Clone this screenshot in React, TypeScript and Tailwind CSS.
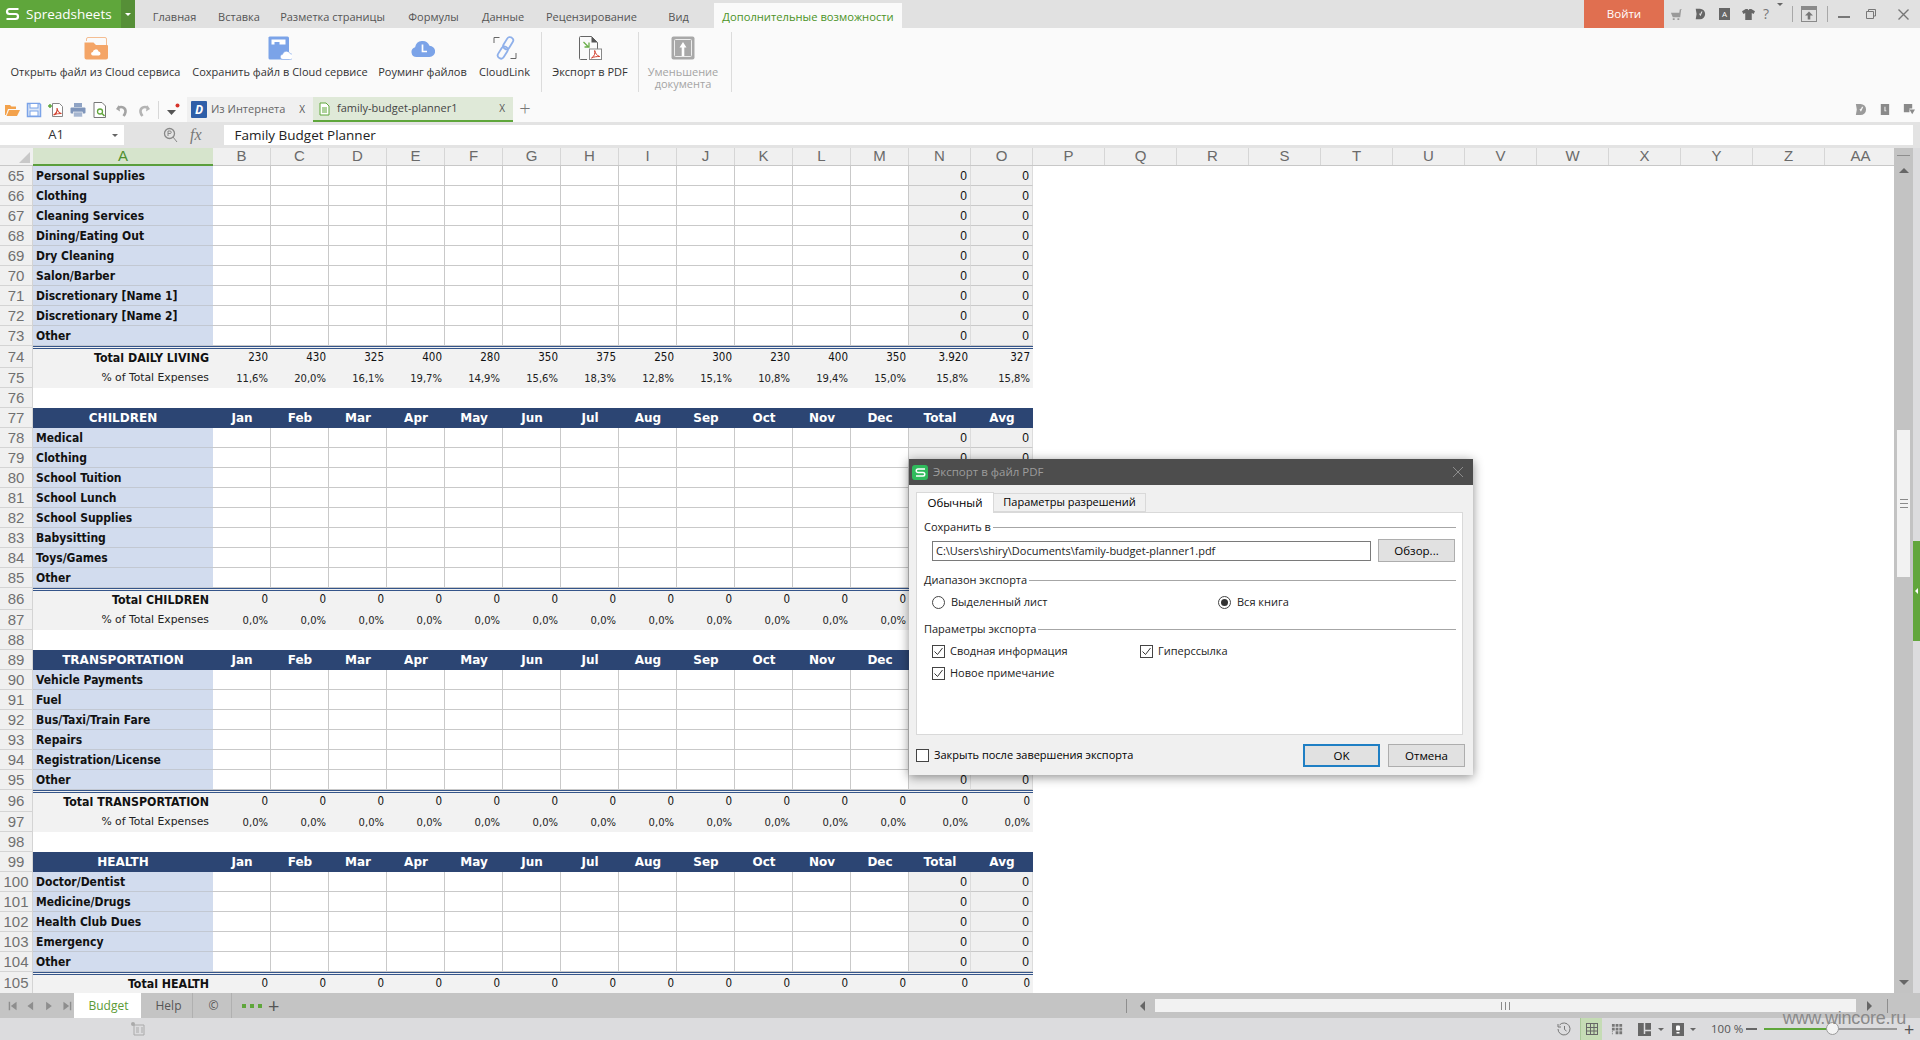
import React from "react";

const ui = "font-['Open_Sans','Noto_Sans',sans-serif]";
const sheetFont = "font-['DejaVu_Sans',sans-serif]";
const condensed = "font-['DejaVu_Sans_Condensed','DejaVu_Sans',sans-serif]";
const arial = "font-['Liberation_Sans',Arial,sans-serif]";

const months = ["Jan", "Feb", "Mar", "Apr", "May", "Jun", "Jul", "Aug", "Sep", "Oct", "Nov", "Dec", "Total", "Avg"];
const dataCols = ["B", "C", "D", "E", "F", "G", "H", "I", "J", "K", "L", "M", "N", "O"];
const restCols = ["P", "Q", "R", "S", "T", "U", "V", "W", "X", "Y", "Z", "AA"];

type Row =
  | { n: number; kind: "item"; label: string }
  | { n: number; kind: "head"; label: string }
  | { n: number; kind: "empty" }
  | { n: number; kind: "total"; label: string; values: string[] }
  | { n: number; kind: "pct"; values: string[] };

const zeros = Array(14).fill("0");
const zeroPct = Array(14).fill("0,0%");

const items = (start: number, labels: string[]): Row[] =>
  labels.map((label, i) => ({ n: start + i, kind: "item", label }));

const rows: Row[] = [
  ...items(65, ["Personal Supplies", "Clothing", "Cleaning Services", "Dining/Eating Out", "Dry Cleaning", "Salon/Barber", "Discretionary [Name 1]", "Discretionary [Name 2]", "Other"]),
  { n: 74, kind: "total", label: "Total DAILY LIVING", values: ["230", "430", "325", "400", "280", "350", "375", "250", "300", "230", "400", "350", "3.920", "327"] },
  { n: 75, kind: "pct", values: ["11,6%", "20,0%", "16,1%", "19,7%", "14,9%", "15,6%", "18,3%", "12,8%", "15,1%", "10,8%", "19,4%", "15,0%", "15,8%", "15,8%"] },
  { n: 76, kind: "empty" },
  { n: 77, kind: "head", label: "CHILDREN" },
  ...items(78, ["Medical", "Clothing", "School Tuition", "School Lunch", "School Supplies", "Babysitting", "Toys/Games", "Other"]),
  { n: 86, kind: "total", label: "Total CHILDREN", values: zeros },
  { n: 87, kind: "pct", values: zeroPct },
  { n: 88, kind: "empty" },
  { n: 89, kind: "head", label: "TRANSPORTATION" },
  ...items(90, ["Vehicle Payments", "Fuel", "Bus/Taxi/Train Fare", "Repairs", "Registration/License", "Other"]),
  { n: 96, kind: "total", label: "Total TRANSPORTATION", values: zeros },
  { n: 97, kind: "pct", values: zeroPct },
  { n: 98, kind: "empty" },
  { n: 99, kind: "head", label: "HEALTH" },
  ...items(100, ["Doctor/Dentist", "Medicine/Drugs", "Health Club Dues", "Emergency", "Other"]),
  { n: 105, kind: "total", label: "Total HEALTH", values: zeros },
];

const colW = (i: number) => (i < 12 ? "w-[58px]" : "w-[62px]");

const SheetRow = ({ row }: { row: Row }) => {
  const tall = row.kind === "total";
  return (
    <div className={`flex ${tall ? "h-[22px]" : "h-[20px]"}`}>
      <div className={`w-[33px] shrink-0 bg-[#f0f0f0] border-r border-b border-[#d4d4d4] pt-[1px] flex items-center justify-center text-[15px] text-[#707070] ${arial}`}>
        {row.n}
      </div>
      {row.kind === "item" && (
        <>
          <div className={`w-[180px] shrink-0 bg-[#d2dcee] border-b border-[#c2c8d2] pl-[3px] pt-[1px] flex items-center text-[12px] font-bold text-[#111] ${condensed}`}>
            {row.label}
          </div>
          {dataCols.map((c, i) => (
            <div
              key={c}
              className={`${colW(i)} shrink-0 border-b border-[#c9c9c9] flex items-center justify-end pr-[3px] text-[12px] text-[#111] ${arial} ${
                i < 12 ? "border-r" : "bg-[#f0f0f0] border-r border-r-[#dcdcdc]"
              }`}
            >
              {i < 12 ? "" : "0"}
            </div>
          ))}
        </>
      )}
      {row.kind === "head" && (
        <div className="flex bg-[#2c4573] text-white font-bold text-[12px]">
          <div className="w-[180px] shrink-0 flex items-center justify-center">{row.label}</div>
          {months.map((m, i) => (
            <div key={m} className={`${colW(i)} shrink-0 flex items-center justify-center`}>
              {m}
            </div>
          ))}
        </div>
      )}
      {row.kind === "total" && (
        <div className="flex bg-[#f2f2f2] border-t-[3px] border-double border-[#35558a] text-[#111]">
          <div className={`w-[180px] shrink-0 flex items-center justify-end pr-[4px] pb-[1px] font-bold text-[12.300px] ${condensed}`}>{row.label}</div>
          {row.values.map((v, i) => (
            <div key={i} className={`${colW(i)} shrink-0 flex items-center justify-end pr-[3px] pb-[1px] text-[11.5px] ${condensed}`}>
              {v}
            </div>
          ))}
        </div>
      )}
      {row.kind === "pct" && (
        <div className="flex bg-[#f2f2f2] text-[#222] text-[10.8px]">
          <div className="w-[180px] shrink-0 flex items-center justify-end pr-[4px]">% of Total Expenses</div>
          {row.values.map((v, i) => (
            <div key={i} className={`${colW(i)} shrink-0 flex items-center justify-end pr-[3px] text-[10px]`}>
              {v}
            </div>
          ))}
        </div>
      )}
    </div>
  );
};

const Sep = ({ h = "h-[60px]" }: { h?: string }) => <div className={`w-px ${h} bg-[#dcdcdc] shrink-0`} />;

const RibbonBtn = ({ w, icon, label, dim }: { w: string; icon: React.ReactNode; label: string; dim?: boolean }) => (
  <div className={`${w} shrink-0 flex flex-col items-center pt-[8px]`}>
    <div className="h-[24px] flex items-center justify-center">{icon}</div>
    <div className={`mt-[6px] text-center text-[11px] leading-[12px] ${dim ? "text-[#a4a4a4]" : "text-[#333]"} ${dim ? "" : "whitespace-nowrap"}`}>{label}</div>
  </div>
);

const FolderIcon = () => (
  <svg width="24" height="24" viewBox="0 0 24 24">
    <path d="M2.500 5V3a1.500 1.500 0 0 1 1.500-1.500h17A1.500 1.500 0 0 1 22.500 3v6" fill="none" stroke="#f4bd92" strokeWidth="1" />
    <path d="M0.500 6.500h9l2.500 2.500h11a1 1 0 0 1 1 1v11.500a2 2 0 0 1-2 2H2.500a2 2 0 0 1-2-2z" fill="#f4a567" />
    <path d="M9 19.500a1.800 1.800 0 0 1-.2-3.600 3 3 0 0 1 5.800-.5 2.100 2.100 0 0 1 .4 4.100z" fill="#fff" />
  </svg>
);
const SaveCloudIcon = () => (
  <svg width="24" height="24" viewBox="0 0 24 24">
    <path d="M1.500 0.500h18a1.500 1.500 0 0 1 1.500 1.500v21.500H2a1.500 1.500 0 0 1-1.500-1.500V1.500z" fill="#7ba3e8" />
    <path d="M3.500 3.500h14v5h-6V6h-5v2.500H3.500z" fill="#fff" />
    <path d="M15 23.500a2.600 2.600 0 0 1-.4-5.200 4 4 0 0 1 7.600-.6 2.900 2.900 0 0 1 .4 5.800z" fill="#fff" stroke="#7ba3e8" strokeWidth="0.600" />
  </svg>
);
const CloudLIcon = () => (
  <svg width="24" height="18" viewBox="0 0 24 18">
    <path d="M5.500 18a5 5 0 0 1-1.400-9.800A7.500 7.500 0 0 1 18.500 6.800 5.600 5.600 0 0 1 18.500 18z" fill="#7ba3e8" />
    <path d="M11.500 5.500v7h4.500" fill="none" stroke="#fff" strokeWidth="1.700" />
  </svg>
);
const LinkIcon = () => (
  <svg width="24" height="24" viewBox="0 0 24 24">
    <path d="M1 7V1.500h5.500M23 17v5.500h-5.500" fill="none" stroke="#666" strokeWidth="1" />
    <g fill="none" stroke="#8fb0ea" strokeWidth="1.800">
      <rect x="12" y="0.500" width="6.500" height="13" rx="3.200" transform="rotate(32 15 7)" />
      <rect x="6.500" y="10" width="6.500" height="13" rx="3.200" transform="rotate(32 9.700 16.500)" />
    </g>
  </svg>
);
const PdfIcon = () => (
  <svg width="24" height="24" viewBox="0 0 24 24">
    <path d="M9 23.500H2.500a1 1 0 0 1-1-1V1.500a1 1 0 0 1 1-1h11l6 6v7" fill="none" stroke="#666" strokeWidth="1" />
    <path d="M13.500 0.500l6 6h-6z" fill="#555" />
    <path d="M5.500 6l5 5M11 6.500V11H6.500" fill="none" stroke="#6bae4a" strokeWidth="1.300" />
    <rect x="11.500" y="13" width="12" height="10.500" fill="#fff" stroke="#888" />
    <path d="M13.500 22c3-1.800 3.800-4.500 3.200-7.500.7 3 2 5 5 6-2.800 0-5.500.2-8.200 1.500z" fill="none" stroke="#d2402e" strokeWidth="1" />
  </svg>
);
const ShrinkIcon = () => (
  <svg width="24" height="24" viewBox="0 0 24 24">
    <rect x="0.500" y="0.500" width="23" height="23" rx="2" fill="#a8a8a8" />
    <rect x="3.500" y="3.500" width="17" height="17" rx="1" fill="none" stroke="#ececec" />
    <path d="M12 6l3.500 5.500H13.300V20h-2.600v-8.500H8.500z" fill="#fff" />
  </svg>
);

const Qa = ({ children }: { children: React.ReactNode }) => (
  <svg width="16" height="16" viewBox="0 0 16 16" className="shrink-0">
    {children}
  </svg>
);

const Glyph = ({ size = 14, color = "#6e6e6e", d }: { size?: number; color?: string; d: string }) => (
  <svg width={size} height={size} viewBox="0 0 14 14" className="shrink-0">
    <path d={d} fill={color} fillRule="evenodd" />
  </svg>
);

const GroupTitle = ({ label }: { label: string }) => (
  <div className="flex items-center gap-[2px] h-[16px] text-[11px] text-[#222]">
    <span>{label}</span>
    <div className="flex-1 h-px bg-[#a6a6a6]" />
  </div>
);

const Check = ({ label, w }: { label: string; w?: string }) => (
  <div className={`flex items-center gap-[5px] text-[11px] text-[#222] ${w ?? ""}`}>
    <svg width="13" height="13" viewBox="0 0 13 13" className="shrink-0">
      <rect x="0.500" y="0.500" width="12" height="12" fill="#fff" stroke="#444" />
      <path d="M2.500 6.500l3 3 5-6.500" fill="none" stroke="#333" strokeWidth="1" />
    </svg>
    <span>{label}</span>
  </div>
);

const Radio = ({ label, on, w }: { label: string; on?: boolean; w?: string }) => (
  <div className={`flex items-center gap-[6px] text-[11px] text-[#222] ${w ?? ""}`}>
    <span className="w-[13px] h-[13px] rounded-full border border-[#444] bg-white flex items-center justify-center shrink-0">
      {on && <span className="w-[7px] h-[7px] rounded-full bg-[#333]" />}
    </span>
    <span>{label}</span>
  </div>
);

const ExportDialog = () => (
  <div className={`absolute left-[909px] top-[459px] w-[564px] h-[316px] bg-[#f0f0f0] flex flex-col shadow-[0_2px_10px_rgba(0,0,0,0.45)] text-[11.5px] ${ui}`}>
    <div className="h-[26px] bg-[#4d4d4d] flex items-center pl-[3px] pr-[9px] shrink-0">
      <span className="w-[16px] h-[15px] rounded-[3px] bg-[#2fbb5c] flex items-center justify-center mr-[5px]">
        <svg width="11" height="9" viewBox="0 0 11 9">
          <path d="M10 1H3a1.300 1.300 0 0 0 0 3.500h5a1.300 1.300 0 0 1 0 3.500H1" fill="none" stroke="#fff" strokeWidth="1.500" />
        </svg>
      </span>
      <span className="text-[#9c9c9c] text-[11.5px] flex-1">Экспорт в файл PDF</span>
      <svg width="12" height="12" viewBox="0 0 12 12">
        <path d="M1 1l10 10M11 1L1 11" stroke="#8c8c8c" strokeWidth="1" />
      </svg>
    </div>
    <div className="pl-[7px] pt-[7px] pr-[10px] flex-1 flex flex-col">
      <div className="flex items-end h-[20px] shrink-0 relative z-10">
        <div className="w-[78px] h-[21px] -mb-px bg-white border border-[#d9d9d9] border-b-0 flex items-center justify-center">Обычный</div>
        <div className="w-[152px] h-[19px] bg-[#f0f0f0] border border-l-0 border-[#d9d9d9] flex items-center justify-center text-[11px]">Параметры разрешений</div>
      </div>
      <div className="h-[223px] bg-white border border-[#d9d9d9] px-[7px] pt-[6px] pr-[6px] shrink-0">
        <GroupTitle label="Сохранить в" />
        <div className="flex items-center mt-[4px] pl-[8px] pr-[1px] gap-[7px]">
          <div className="flex-1 h-[20px] border border-[#7a7a7a] flex items-center pl-[3px] pt-[1px] text-[11px] text-[#222]">
            C:\Users\shiry\Documents\family-budget-planner1.pdf
          </div>
          <div className="w-[77px] h-[23px] bg-[#e1e1e1] border border-[#adadad] flex items-center justify-center">Обзор...</div>
        </div>
        <div className="mt-[10px]">
          <GroupTitle label="Диапазон экспорта" />
        </div>
        <div className="flex items-center mt-[6px] pl-[8px] h-[16px]">
          <Radio label="Выделенный лист" w="w-[286px]" />
          <Radio label="Вся книга" on />
        </div>
        <div className="mt-[11px]">
          <GroupTitle label="Параметры экспорта" />
        </div>
        <div className="flex items-center mt-[6px] pl-[8px] h-[16px]">
          <Check label="Сводная информация" w="w-[208px]" />
          <Check label="Гиперссылка" />
        </div>
        <div className="flex items-center mt-[6px] pl-[8px] h-[16px]">
          <Check label="Новое примечание" />
        </div>
      </div>
      <div className="flex items-center mt-[9px] -mr-[2px]">
        <span className="w-[13px] h-[13px] border border-[#444] bg-white shrink-0 mr-[5px]" />
        <span className="flex-1 text-[11px]">Закрыть после завершения экспорта</span>
        <div className="w-[77px] h-[23px] bg-[#e1e1e1] border-2 border-[#1f7fc4] flex items-center justify-center mr-[8px]">OK</div>
        <div className="w-[77px] h-[23px] bg-[#e1e1e1] border border-[#adadad] flex items-center justify-center">Отмена</div>
      </div>
    </div>
  </div>
);

const Caret = ({ cls = "" }: { cls?: string }) => (
  <span className={`w-0 h-0 shrink-0 border-x-[3px] border-x-transparent border-t-[3px] border-t-[#666] ${cls}`} />
);

export default function App() {
  return (
    <div className={`relative w-[1920px] h-[1040px] overflow-hidden flex flex-col bg-[#e2e2e2] ${ui}`}>
      {/* title bar with menu tabs */}
      <div className="h-[28px] shrink-0 bg-[#e1e1e1] flex text-[11px] text-[#555]">
        <div className="w-[121px] bg-[#5fa63b] flex items-center pl-[5px] gap-[6px] text-white text-[13.5px]">
          <svg width="15" height="14" viewBox="0 0 15 14" className="shrink-0">
            <path d="M13.500 2H4.500a2.500 2.500 0 0 0 0 5h6a2.500 2.500 0 0 1 0 5h-9" fill="none" stroke="#fff" strokeWidth="2.200" />
          </svg>
          <span>Spreadsheets</span>
        </div>
        <div className="w-[14px] bg-[#568f37] flex items-center justify-center">
          <span className="w-0 h-0 border-x-[3px] border-x-transparent border-t-[3px] border-t-white" />
        </div>
        {[
          ["Главная", "w-[79px]"],
          ["Вставка", "w-[50px]"],
          ["Разметка страницы", "w-[137px]"],
          ["Формулы", "w-[65px]"],
          ["Данные", "w-[74px]"],
          ["Рецензирование", "w-[103px]"],
          ["Вид", "w-[71px]"],
        ].map(([t, w]) => (
          <div key={t} className={`${w} shrink-0 flex items-center justify-center pt-[6px]`}>
            {t}
          </div>
        ))}
        <div className="w-[188px] mt-[3px] bg-[#fafafa] flex items-center justify-center pt-[3px] text-[11.2px] text-[#4c9327]">Дополнительные возможности</div>
        <div className="flex-1" />
        <div className="w-[80px] bg-[#e06f50] text-white text-[11.5px] flex items-center justify-center">Войти</div>
        <div className="flex items-center w-[256px]">
          <span className="ml-[6px]"><Glyph size={13} color="#9a9a9a" d="M13 1l-1 1-1 8H3L1 5h9l.5-3.500L12.500 1zM3 11h2v2H3zM8 11h2v2H8z" /></span>
          <span className="ml-[11px]"><Glyph size={12} color="#666" d="M2 1h5a6 6 0 0 1 0 12H2l1-6zM6 7l1.500 2.500L10 4H8.500L7.300 7 6.800 6z" /></span>
          <span className="ml-[13px] w-[11px] h-[12px] bg-[#666] flex items-center justify-center text-[8px] leading-none text-white">A</span>
          <span className="ml-[12px]"><Glyph size={13} color="#666" d="M4 1h2l1 1.500L8 1h2l4 2.500-1.500 3L10.500 5.500V13h-7V5.500L1.500 6.500 0 3.500z" /></span>
          <span className="ml-[8px] w-[9px] text-[14px] leading-none text-[#777]">?</span>
          <span className="ml-[5px] mt-[1px]"><Caret /></span>
          <span className="ml-[9px] w-px h-[16px] bg-[#a8a8a8] shrink-0" />
          <svg width="16" height="16" viewBox="0 0 16 16" className="shrink-0 ml-[8px]">
            <rect x="0.500" y="0.500" width="15" height="15" fill="none" stroke="#8a8a8a" />
            <rect x="1" y="1" width="14" height="3" fill="#8a8a8a" />
            <path d="M8 5.500l4 4H9.300v4H6.700v-4H4z" fill="#777" />
          </svg>
          <span className="ml-[10px] w-px h-[16px] bg-[#a8a8a8] shrink-0" />
          <span className="ml-[10px] w-[12px] h-[2px] bg-[#777] mt-[5px] shrink-0" />
          <svg width="12" height="12" viewBox="0 0 12 12" className="ml-[15px] shrink-0">
            <path d="M3.500 3V1.500h7v6.500H8.500M1.500 3.500h7v7h-7z" fill="none" stroke="#777" />
          </svg>
          <svg width="11" height="11" viewBox="0 0 11 11" className="ml-[21px] shrink-0">
            <path d="M0.500 0.500l10 10M10.500 0.500l-10 10" stroke="#777" strokeWidth="1.400" />
          </svg>
        </div>
      </div>

      {/* ribbon */}
      <div className="h-[69px] shrink-0 bg-[#fafafa] flex items-start pl-[10px]">
        <RibbonBtn w="w-[171px]" icon={<FolderIcon />} label="Открыть файл из Cloud сервиса" />
        <div className="w-[12px]" />
        <RibbonBtn w="w-[174px]" icon={<SaveCloudIcon />} label="Сохранить файл в Cloud сервисе" />
        <div className="w-[11px]" />
        <RibbonBtn w="w-[89px]" icon={<CloudLIcon />} label="Роуминг файлов" />
        <div className="w-[12px]" />
        <RibbonBtn w="w-[51px]" icon={<LinkIcon />} label="CloudLink" />
        <div className="w-[11px]" />
        <div className="pt-[4px]"><Sep /></div>
        <div className="w-[9px]" />
        <RibbonBtn w="w-[78px]" icon={<PdfIcon />} label="Экспорт в PDF" />
        <div className="w-[9px]" />
        <div className="pt-[4px]"><Sep /></div>
        <div className="w-[10px]" />
        <RibbonBtn w="w-[68px]" icon={<ShrinkIcon />} label="Уменьшение документа" dim />
        <div className="w-[14px]" />
        <div className="pt-[4px]"><Sep /></div>
      </div>

      {/* quick access and document tabs */}
      <div className="h-[25px] shrink-0 bg-[#fafafa] flex items-stretch text-[11px]">
        <div className="w-[187px] shrink-0 flex items-center pl-[4px] gap-[6px]">
          <Qa>
            <path d="M1 13V3h5l1.500 1.500H12V7H4l-2 6z" fill="#f3a24c" />
            <path d="M2.500 14l2.500-6h11l-3 6z" fill="#f3a24c" />
          </Qa>
          <Qa>
            <path d="M1.500 1.500h12l1 1v12h-13z" fill="#dbe6f7" stroke="#7ba3e8" strokeWidth="1.500" />
            <rect x="4" y="1.500" width="8" height="4.500" fill="#fff" stroke="#7ba3e8" />
            <rect x="4" y="9" width="8" height="5" fill="#fff" stroke="#7ba3e8" />
          </Qa>
          <Qa>
            <path d="M4.500 1.500h7l3 3v10h-10z" fill="#fff" stroke="#888" />
            <path d="M0 4h4M2 2v4" stroke="#5ca63c" strokeWidth="1.500" />
            <path d="M5.500 13c3-1.500 4-4 3.500-7 .5 3 2 5 4.500 5.500-2.800 0-5.500.300-8 1.500z" fill="none" stroke="#d2402e" strokeWidth="1.100" />
          </Qa>
          <Qa>
            <rect x="4" y="1" width="8" height="4" fill="#8fa3c4" />
            <rect x="0.500" y="5.500" width="15" height="6" rx="1" fill="#7f95ba" />
            <rect x="3.500" y="10" width="9" height="5" fill="#a6b6d0" stroke="#fafafa" strokeWidth="0.600" />
          </Qa>
          <Qa>
            <path d="M2 0.500h8l3.500 3.500v11.500H2z" fill="#fff" stroke="#777" />
            <circle cx="8" cy="9.500" r="2.500" fill="none" stroke="#62a63c" strokeWidth="1.300" />
            <path d="M10 11.500l2.500 2.500" stroke="#62a63c" strokeWidth="1.600" />
          </Qa>
          <Qa>
            <path d="M5 3L2 7l4 2.500z" fill="#a4a4a4" />
            <path d="M4 6c4-2.500 8 0 7.500 4-.2 1.500-1 2.800-2 4" fill="none" stroke="#a4a4a4" strokeWidth="2.600" />
          </Qa>
          <Qa>
            <path d="M11 3l3 4-4 2.500z" fill="#b4b4b4" />
            <path d="M12 6C8 3.500 4 6 4.500 10c.2 1.500 1 2.800 2 4" fill="none" stroke="#b4b4b4" strokeWidth="2.600" />
          </Qa>
          <span className="w-px h-[18px] bg-[#d8d8d8]" />
          <svg width="14" height="14" viewBox="0 0 14 14" className="shrink-0 ml-[1px]">
            <circle cx="11.500" cy="2.500" r="2" fill="#d6332a" />
            <path d="M1 7h9L5.500 12z" fill="#555" />
          </svg>
        </div>
        <div className="w-[126px] shrink-0 bg-[#f0f0f0] flex items-center pl-[4px] text-[#666]">
          <span className="w-[16px] h-[17px] rounded-[1px] bg-[#2f5fa8] text-white text-[12px] italic font-bold flex items-center justify-center mr-[4px]">D</span>
          <span className="flex-1">Из Интернета</span>
          <span className="text-[#555] text-[10px] pr-[8px]">X</span>
        </div>
        <div className="w-[200px] shrink-0 bg-[#dfe9d8] border-b-2 border-[#5fa63b] flex items-center pl-[6px] text-[#444]">
          <svg width="11" height="14" viewBox="0 0 11 14" className="mr-[7px] shrink-0">
            <path d="M1 1h6l3 3v9H1z" fill="#fff" stroke="#5fa63b" />
            <path d="M3 6h5M3 8h5M3 10h5" stroke="#5fa63b" />
          </svg>
          <span className="flex-1">family-budget-planner1</span>
          <span className="text-[#555] text-[10px] pr-[8px]">X</span>
        </div>
        <div className="w-[24px] flex items-center justify-center text-[#777] text-[20px] leading-none font-light pb-[2px]">+</div>
        <div className="flex-1" />
        <div className="flex items-center gap-[11px] pr-[5px]">
          <Glyph size={13} d="M2 1h5a6 6 0 0 1 0 12H2l1-6zM6 7l1.500 2.500L10 4H8.500L7.300 7 6.800 6z" color="#9a9a9a" />
          <Glyph size={13} d="M3 1h9v12H3zM7 4v5h2V8H8V4z" color="#8a8a8a" />
          <Glyph size={13} d="M2 1h9v5H8v4H2zM8 7h6l-3 5z" color="#8a8a8a" />
        </div>
      </div>

      {/* formula bar */}
      <div className="h-[26px] shrink-0 bg-[#e3e3e3] flex items-center py-[3px]">
        <div className="w-[124px] h-[20px] bg-white flex items-center text-[13px] text-[#333] shrink-0">
          <span className="w-[112px] text-center">A1</span>
          <Caret />
        </div>
        <div className="w-[99.500px] shrink-0 flex items-center pl-[39px] gap-[12px] text-[#777]">
          <svg width="15" height="16" viewBox="0 0 15 16">
            <circle cx="6.500" cy="6.500" r="5" fill="none" stroke="#888" strokeWidth="1.300" />
            <path d="M10 10l4 5M5 4v5M5 4h2a1.200 1.200 0 0 1 0 2.500H5" fill="none" stroke="#888" />
          </svg>
          <span className="font-['Liberation_Serif',serif] italic text-[16px] leading-none">fx</span>
        </div>
        <div className="w-[1689px] h-[20px] bg-white shrink-0 flex items-center pl-[11px] text-[13.5px] text-[#222]">Family Budget Planner</div>
      </div>

      {/* sheet */}
      <div className="flex-1 min-h-0 flex">
        <div className="w-[1894px] shrink-0 flex flex-col bg-white min-h-0 overflow-hidden">
          <div className={`h-[18px] shrink-0 flex bg-[#f0f0f0] border-b border-[#c8c8c8] text-[15px] text-[#6a6a6a] ${arial}`}>
            <div className="w-[33px] shrink-0 flex items-end justify-end pr-[3px] pb-[2px]">
              <span className="w-0 h-0 border-l-[11px] border-l-transparent border-b-[11px] border-b-[#c8c8c8]" />
            </div>
            <div className="w-[180px] shrink-0 bg-[#d6e4cc] border-b-2 border-[#5a9e3c] h-[18px] flex items-center justify-center text-[#4f8f2f]">A</div>
            {dataCols.map((c, i) => (
              <div key={c} className={`${colW(i)} shrink-0 border-r border-[#d6d6d6] flex items-center justify-center`}>
                {c}
              </div>
            ))}
            {restCols.map((c) => (
              <div key={c} className="w-[72px] shrink-0 border-r border-[#d6d6d6] flex items-center justify-center">
                {c}
              </div>
            ))}
          </div>
          <div className={`flex-1 min-h-0 overflow-hidden ${sheetFont}`}>
            {rows.map((r) => (
              <SheetRow key={r.n} row={r} />
            ))}
          </div>
        </div>
        {/* vertical scrollbar */}
        <div className="w-[19px] shrink-0 bg-[#c3c3c3] flex flex-col items-center">
          <div className="w-[13px] h-px bg-[#8e8e8e] mt-[7px]" />
          <span className="w-0 h-0 border-x-[5px] border-x-transparent border-b-[5px] border-b-[#666] mt-[12px]" />
          <div className="w-[13px] h-[147px] bg-[#f2f2f2] mt-[257px] flex flex-col items-center justify-center gap-[3px]">
            <span className="w-[8px] h-px bg-[#8a8a8a]" />
            <span className="w-[8px] h-px bg-[#8a8a8a]" />
            <span className="w-[8px] h-px bg-[#8a8a8a]" />
          </div>
          <div className="flex-1" />
          <span className="w-0 h-0 border-x-[5px] border-x-transparent border-t-[5px] border-t-[#666] mb-[8px]" />
        </div>
        <div className="w-[7px] shrink-0 bg-[#dcdcde] flex flex-col">
          <div className="h-[393px]" />
          <div className="h-[100px] bg-[#62a63c] flex items-center justify-center">
            <span className="w-0 h-0 border-y-[3px] border-y-transparent border-r-[3px] border-r-white" />
          </div>
        </div>
      </div>

      {/* sheet tabs */}
      <div className="h-[25px] shrink-0 bg-[#c4c4c4] flex items-center text-[12px] text-[#555]">
        <div className="w-[74px] shrink-0 flex items-center pl-[8px] gap-[8px]">
          <Glyph size={10} color="#8e8e8e" d="M1 1h2v12H1zM12 1v12L4 7z" />
          <Glyph size={10} color="#8e8e8e" d="M10 1v12L2 7z" />
          <Glyph size={10} color="#8e8e8e" d="M3 1v12l8-6z" />
          <Glyph size={10} color="#8e8e8e" d="M13 1h-2v12h2zM2 1v12l8-6z" />
        </div>
        <div className="w-[67px] h-full bg-white text-[#5b9a36] pl-[2px] flex items-center justify-center">Budget</div>
        <div className="w-[52px] h-full border-r border-[#b0b0b0] pl-[4px] flex items-center justify-center">Help</div>
        <div className="w-[39px] h-full border-r border-[#b0b0b0] pl-[3px] flex items-center justify-center">©</div>
        <div className="flex items-center gap-[2px] ml-[10px]">
          <span className="w-[4px] h-[4px] bg-[#5fa63b]" />
          <span className="w-[4px] h-[4px] bg-[#5fa63b] ml-[2px]" />
          <span className="w-[4px] h-[4px] bg-[#5fa63b] ml-[2px]" />
        </div>
        <span className="ml-[6px] text-[20px] leading-none text-[#555]">+</span>
        <div className="flex-1" />
        <span className="w-px h-[14px] bg-[#8e8e8e]" />
        <span className="ml-[13px] w-0 h-0 border-y-[5px] border-y-transparent border-r-[5px] border-r-[#666]" />
        <div className="ml-[10px] w-[701px] h-[13px] bg-[#f2f2f2] flex items-center justify-center gap-[3px]">
          <span className="w-px h-[8px] bg-[#8a8a8a]" />
          <span className="w-px h-[8px] bg-[#8a8a8a]" />
          <span className="w-px h-[8px] bg-[#8a8a8a]" />
        </div>
        <span className="ml-[11px] w-0 h-0 border-y-[5px] border-y-transparent border-l-[5px] border-l-[#666]" />
        <span className="ml-[15px] w-px h-[14px] bg-[#8e8e8e]" />
        <div className="w-[32px]" />
      </div>

      {/* status bar */}
      <div className="h-[22px] shrink-0 bg-[#dcdcde] flex items-center relative text-[11.5px] text-[#555]">
        <svg width="14" height="14" viewBox="0 0 14 14" className="ml-[131px] shrink-0">
          <circle cx="2" cy="2" r="2" fill="#aaa" />
          <path d="M3 3h10v10H3zM5 6h3M5 8h3M5 10h3M10 6h2M10 8h2M10 10h2" fill="none" stroke="#aaa" />
        </svg>
        <div className="flex-1" />
        <svg width="14" height="14" viewBox="0 0 14 14" className="shrink-0 mr-[9px]">
          <path d="M2.500 3a6 6 0 1 1-1.500 4M1 2v3h3M7.500 4v3.500l2 1.500" fill="none" stroke="#777" />
        </svg>
        <div className="w-[22px] h-full bg-[#c5dcb5] border-l border-[#a8c898] flex items-center justify-center shrink-0">
          <Glyph size={14} color="#666" d="M1 1h12v12H1zM2 2v3h3V2zM6 2v3h2.500V2zM9.500 2v3H12V2zM2 6v2.500h3V6zM6 6v2.500h2.500V6zM9.500 6v2.500H12V6zM2 9.500V12h3V9.500zM6 9.500V12h2.500V9.500zM9.500 9.500V12H12V9.500z" />
        </div>
        <span className="ml-[9px]"><Glyph size={13} color="#777" d="M1 1h3v3H1zM5 1h3v3H5zM9 1h3v3H9zM1 5h3v3H1zM5 5h3v3H5zM9 5h3v3H9zM5 9h3v3H5zM9 9h3v3H9zM1 9h1v1H1zM1 11h1v1H1z" /></span>
        <svg width="13" height="13" viewBox="0 0 13 13" className="ml-[14px] shrink-0">
          <path d="M0 0h13v13H0z" fill="#666" />
          <path d="M6.500 0v11M6.500 7.500H13" stroke="#dcdcde" strokeWidth="1.500" />
        </svg>
        <Caret cls="ml-[7px]" />
        <svg width="12" height="13" viewBox="0 0 12 13" className="ml-[8px] shrink-0">
          <path d="M0 0h12v13H0z" fill="#666" />
          <rect x="4" y="2.500" width="4" height="5" rx="1" fill="#fff" />
          <rect x="4.500" y="9" width="3" height="1.500" fill="#fff" />
        </svg>
        <Caret cls="ml-[6px]" />
        <span className="ml-[15px] w-[30px] whitespace-nowrap text-[11.5px]">100 %</span>
        <span className="ml-[5px] w-[11px] h-[2px] bg-[#666] shrink-0" />
        <div className="ml-[7px] w-[133px] h-[2px] bg-[#999] relative shrink-0">
          <div className="w-[64px] h-[2px] bg-[#5fa63b]" />
          <span className="absolute left-[62px] -top-[6px] w-[13px] h-[13px] rounded-full bg-[#f4f4f4] border border-[#9a9a9a]" />
        </div>
        <span className="ml-[7px] w-[10px] text-center text-[18px] leading-none text-[#555] mr-[6px]">+</span>
        <span className={`absolute right-[14px] -top-[10px] text-[18px] leading-[20px] text-[#8a8a8a] font-light tracking-[-0.2px] ${arial}`}>www.wincore.ru</span>
      </div>

      <ExportDialog />
    </div>
  );
}
